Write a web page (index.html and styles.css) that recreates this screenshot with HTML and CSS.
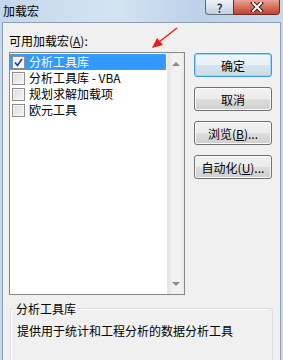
FILE: index.html
```html
<!DOCTYPE html>
<html lang="zh-CN">
<head>
  <meta charset="UTF-8">
  <title>加载宏</title>
  <link rel="stylesheet" href="styles.css">
</head>
<body>
  <div class="window">
    <div class="titlebar">
      <span class="title">加载宏</span>
      <div class="caption-buttons">
        <div class="cap-btn help">?</div>
        <div class="cap-btn close">
          <svg width="14" height="10" viewBox="0 0 14 10">
            <path d="M3 1 L11 9 M11 1 L3 9" stroke="#3a1a14" stroke-width="4" stroke-linecap="square"/>
            <path d="M3 1 L11 9 M11 1 L3 9" stroke="#fff" stroke-width="2" stroke-linecap="square"/>
          </svg>
        </div>
      </div>
    </div>

    <div class="dialog">
      <div class="label">可用加载宏(<u>A</u>):</div>
      <div class="main">
        <div class="listbox">
          <div class="items">
            <div class="item selected">
              <span class="check checked">
                <svg width="9" height="9" viewBox="0 0 9 9"><path d="M1 4.5 L3.5 7.5 L8 1" fill="none" stroke="#2a3a7a" stroke-width="1.6"/></svg>
              </span>
              <span>分析工具库</span>
            </div>
            <div class="item"><span class="check"></span><span>分析工具库 - VBA</span></div>
            <div class="item"><span class="check"></span><span>规划求解加载项</span></div>
            <div class="item"><span class="check"></span><span>欧元工具</span></div>
          </div>
          <div class="scrollbar">
            <span class="arrow up"></span>
            <span class="arrow down"></span>
          </div>
        </div>
        <div class="buttons">
          <button class="btn default">确定</button>
          <button class="btn">取消</button>
          <button class="btn">浏览(<u>B</u>)...</button>
          <button class="btn">自动化(<u>U</u>)...</button>
        </div>
      </div>

      <div class="groupbox">
        <span class="legend">分析工具库</span>
        <p class="desc">提供用于统计和工程分析的数据分析工具</p>
      </div>
    </div>

    <svg class="annot" width="30" height="24" viewBox="0 0 30 24">
      <path d="M27 1 L9 15" stroke="#e3201b" stroke-width="1.4"/>
      <path d="M2 21 L7 11 L13 18 Z" fill="#e3201b"/>
    </svg>
  </div>
</body>
</html>
```

FILE: styles.css
```css
* {
  box-sizing: border-box;
}
body {
  margin: 0;
  width: 283px;
  height: 360px;
  overflow: hidden;
  background: #b9d1ea;
  font-family: "Noto Sans CJK SC", "Microsoft YaHei", sans-serif;
  font-size: 12px;
  color: #000;
}
.window {
  position: relative;
  height: 360px;
  overflow: hidden;
  background: linear-gradient(to right, #c3d8ec, #d3e3f2 40%, #bcd2e9 70%, #c6daee);
}
.titlebar {
  height: 22px;
  display: flex;
  justify-content: space-between;
}
.title {
  padding-left: 3px;
  line-height: 21px;
}
.caption-buttons {
  display: flex;
  height: 15px;
  margin-right: 3px;
}
.cap-btn {
  height: 15px;
  border: 1px solid #5d6a7a;
  border-top: none;
  display: flex;
  align-items: center;
  justify-content: center;
}
.help {
  width: 28px;
  border-right: none;
  border-radius: 0 0 0 4px;
  background: linear-gradient(#eef3f8, #d7e1ec 50%, #c3d0de);
  font-weight: bold;
  font-size: 12px;
  line-height: 13px;
  color: #2c3440;
  text-shadow: 0 0 1px #fff, 0 0 1px #fff;
}
.close {
  width: 47px;
  border-color: #6b2c22;
  border-radius: 0 0 4px 0;
  background: linear-gradient(#e8a596, #d6705d 50%, #c4432e);
}
.dialog {
  margin-left: 2px;
  width: 279px;
  height: 338px;
  overflow: hidden;
  background: #f0f0f0;
  border: 1px solid #8d9fb4;
  border-bottom: none;
  padding: 10px 0 0 6px;
}
.label {
  line-height: 15px;
}
.main {
  display: flex;
  margin-top: 4px;
}
.listbox {
  width: 176px;
  height: 243px;
  border: 1px solid #828790;
  background: #fff;
  display: flex;
}
.items {
  flex: 1;
  padding: 1px 0 0 0;
}
.item {
  height: 16px;
  display: flex;
  align-items: center;
  padding-left: 2px;
  line-height: 16px;
}
.item.selected {
  background: #3399ff;
  color: #fff;
  outline: 1px dotted #c7833f;
  outline-offset: -1px;
  margin-right: 1px;
}
.check {
  width: 13px;
  height: 13px;
  margin-right: 4px;
  border: 1px solid #8e8f8f;
  background: linear-gradient(135deg, #dcdcdc, #f6f6f6);
  box-shadow: inset 0 0 0 1px #f4f4f4;
  display: flex;
  align-items: center;
  justify-content: center;
}
.check.checked {
  background: linear-gradient(135deg, #e4e8f0, #fbfbfc);
}
.scrollbar {
  width: 17px;
  background: linear-gradient(to right, #e4e4e4, #f1f1f1 30%, #f1f1f1 80%, #e9e9e9);
  border-left: 1px solid #e8e8e8;
  display: flex;
  flex-direction: column;
  justify-content: space-between;
  align-items: center;
  padding: 9px 0 8px;
}
.arrow {
  width: 0;
  height: 0;
  border-left: 4px solid transparent;
  border-right: 4px solid transparent;
}
.arrow.up {
  border-bottom: 4px solid #8a8a8a;
}
.arrow.down {
  border-top: 4px solid #8a8a8a;
}
.buttons {
  display: flex;
  flex-direction: column;
  gap: 10px;
  margin: 1px 0 0 9px;
}
.btn {
  width: 78px;
  height: 24px;
  padding: 0;
  font-family: inherit;
  font-size: 12px;
  color: #000;
  border: 1px solid #707070;
  border-radius: 3px;
  background: linear-gradient(#f2f2f2, #ebebeb 50%, #dddddd 51%, #cfcfcf);
  box-shadow: inset 0 0 0 1px #fbfbfb;
}
.btn.default {
  border-color: #3c9be0;
  box-shadow: inset 0 0 0 1px #9ad8f7;
  background: linear-gradient(#f0f6fa, #e6f0f6 50%, #d6e4ee 51%, #cadbe6);
}
.groupbox {
  position: relative;
  margin: 13px 0 0 1px;
  width: 263px;
  height: 56px;
  border: 1px solid #dadfe3;
  border-bottom: none;
  box-shadow: inset 1px 1px 0 #fdfdfd;
  border-radius: 3px 3px 0 0;
}
.legend {
  position: absolute;
  left: 3px;
  top: -8px;
  padding: 0 2px;
  background: #f0f0f0;
  line-height: 15px;
}
.desc {
  margin: 14px 0 0 6px;
  line-height: 16px;
}
.annot {
  position: absolute;
  left: 150px;
  top: 27px;
}
```
